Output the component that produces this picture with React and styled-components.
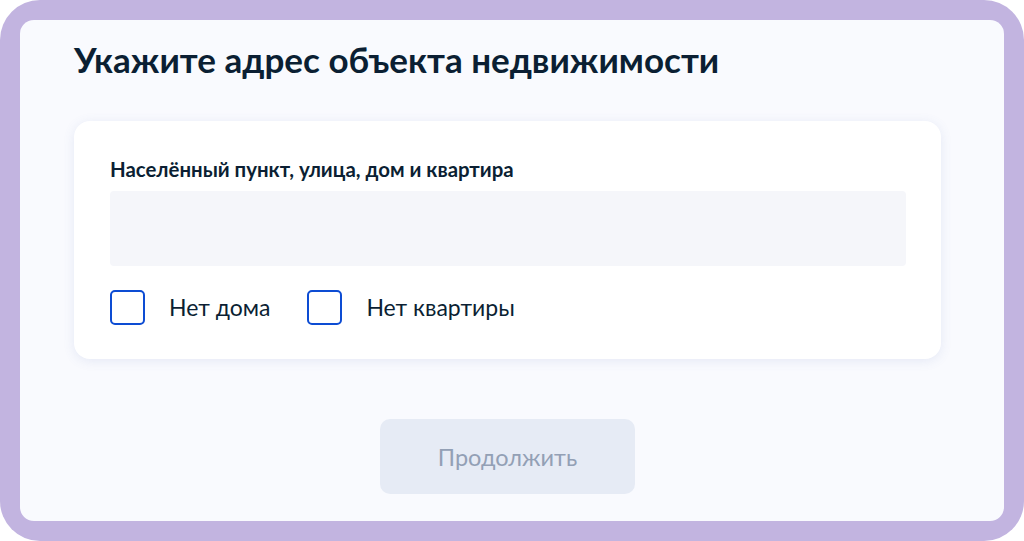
import React, { useState } from 'react';
import styled, { createGlobalStyle } from 'styled-components';

const GlobalStyle = createGlobalStyle`
  html, body {
    margin: 0;
    padding: 0;
    background: #ffffff;
  }
  body {
    font-family: Lato, "Noto Sans", "Liberation Sans", sans-serif;
    color: #0b1f33;
  }
  * { box-sizing: border-box; }
`;

const Frame = styled.div`
  width: 1024px;
  height: 541px;
  padding: 20px;
  background: #c2b4e0;
  border-radius: 40px;
`;

const Panel = styled.div`
  height: 100%;
  background: #f9fafe;
  border-radius: 14px;
  padding: 19px 0 0 54px;
  display: flex;
  flex-direction: column;
`;

const Column = styled.div`
  width: 867px;
  display: flex;
  flex-direction: column;
`;

const Title = styled.h1`
  margin: 0;
  font-size: 35px;
  line-height: 40px;
  font-weight: 700;
  color: #0b1f33;
`;

const Card = styled.div`
  margin-top: 42px;
  background: #ffffff;
  border-radius: 16px;
  box-shadow: 0 2px 12px rgba(86, 110, 180, 0.12);
  padding: 36px 35px 34px 36px;
  display: flex;
  flex-direction: column;
`;

const Label = styled.label`
  font-size: 20.4px;
  line-height: 24px;
  font-weight: 700;
  color: #0b1f33;
`;

const Input = styled.input`
  margin-top: 10px;
  height: 75px;
  border: none;
  border-radius: 4px;
  background: #f5f6fa;
  outline: none;
  padding: 0 16px;
  font-family: inherit;
  font-size: 20px;
`;

const Options = styled.div`
  margin-top: 24px;
  display: flex;
  gap: 37px;
`;

const Option = styled.label`
  display: flex;
  align-items: center;
  gap: 24px;
  cursor: pointer;
  font-size: 23px;
  line-height: 35px;
  color: #0b1f33;
`;

const Box = styled.span`
  width: 35px;
  height: 35px;
  border: 2.5px solid #0d4cd3;
  border-radius: 5px;
  background: ${p => (p.$checked ? '#0d4cd3' : '#ffffff')};
  display: flex;
  align-items: center;
  justify-content: center;
`;

const Footer = styled.div`
  margin-top: 60px;
  display: flex;
  justify-content: center;
`;

const Button = styled.button`
  width: 255px;
  height: 75px;
  border: none;
  border-radius: 10px;
  background: #e6ebf5;
  color: #93a0b5;
  font-family: inherit;
  font-size: 23.5px;
  cursor: default;
`;

function Checkbox({ label, checked, onToggle }) {
  return (
    <Option onClick={onToggle}>
      <Box $checked={checked}>
        {checked && (
          <svg width="18" height="14" viewBox="0 0 18 14">
            <path d="M2 7l5 5 9-10" fill="none" stroke="#fff" strokeWidth="2.5" />
          </svg>
        )}
      </Box>
      {label}
    </Option>
  );
}

export default function App() {
  const [noHouse, setNoHouse] = useState(false);
  const [noFlat, setNoFlat] = useState(false);

  return (
    <>
      <GlobalStyle />
      <Frame>
        <Panel>
          <Column>
            <Title>Укажите адрес объекта недвижимости</Title>
            <Card>
              <Label>Населённый пункт, улица, дом и квартира</Label>
              <Input type="text" />
              <Options>
                <Checkbox label="Нет дома" checked={noHouse} onToggle={() => setNoHouse(v => !v)} />
                <Checkbox label="Нет квартиры" checked={noFlat} onToggle={() => setNoFlat(v => !v)} />
              </Options>
            </Card>
            <Footer>
              <Button disabled>Продолжить</Button>
            </Footer>
          </Column>
        </Panel>
      </Frame>
    </>
  );
}
